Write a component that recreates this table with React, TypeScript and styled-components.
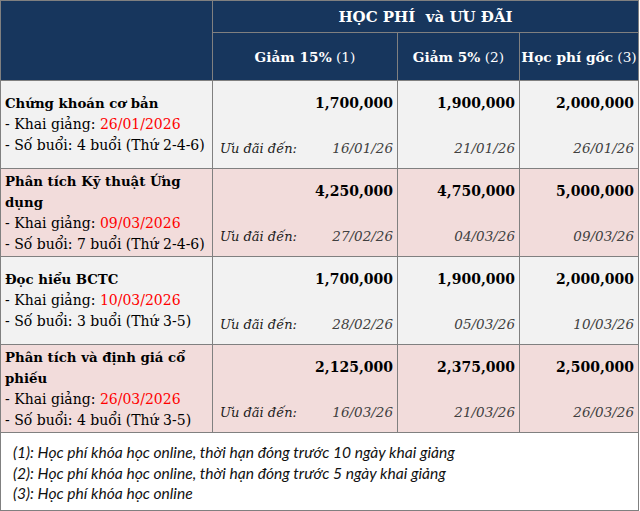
import React from 'react';
import styled, { createGlobalStyle } from 'styled-components';

const GlobalStyle = createGlobalStyle`
    html, body {
        margin: 0;
        padding: 0;
        background: #ffffff;
    }
    body {
        font-family: 'DejaVu Serif', serif;
    }
`;

const Table = styled.div`
    display: grid;
    grid-template-columns: 211px 184px 121px 118px;
    grid-template-rows: 31px 47px repeat(4, 87px) 77px;
    gap: 1px;
    padding: 1px;
    width: 639px;
    box-sizing: border-box;
    background: #808080;
    font-family: 'DejaVu Serif', serif;
    color: #000;
`;

const HeadCell = styled.div<{ $span?: string; $rows?: string }>`
    background: #17365d;
    color: #ffffff;
    display: flex;
    align-items: center;
    justify-content: center;
    font-size: 13.7px;
    white-space: nowrap;
    grid-column: ${(p) => p.$span || 'auto'};
    grid-row: ${(p) => p.$rows || 'auto'};
`;

const HeadTitle = styled.span`
    font-weight: bold;
    font-size: 15px;
    white-space: pre;
`;

const HeadLabel = styled.span`
    font-weight: bold;
`;

const CourseCell = styled.div<{ $pink?: boolean }>`
    background: ${(p) => (p.$pink ? '#f2dcdb' : '#f2f2f2')};
    display: flex;
    flex-direction: column;
    justify-content: center;
    padding: 0 4px;
    font-size: 14px;
    line-height: 21px;
`;

const CourseName = styled.div`
    font-weight: bold;
    font-size: 13.3px;
`;

const Red = styled.span`
    color: #ff0000;
`;

const PriceCell = styled.div<{ $pink?: boolean }>`
    background: ${(p) => (p.$pink ? '#f2dcdb' : '#f2f2f2')};
    display: flex;
    flex-direction: column;
    justify-content: space-between;
    padding: 12px 4px 9px 7px;
    line-height: 21px;
`;

const Price = styled.div`
    font-weight: bold;
    font-size: 14px;
    text-align: right;
`;

const DateRow = styled.div`
    display: flex;
    justify-content: space-between;
    font-style: italic;
    font-size: 13.5px;
`;

const DealLabel = styled.span`
    color: #1a1a1a;
    font-size: 13px;
`;

const DealDate = styled.span`
    color: #404040;
    margin-left: auto;
`;

const Footer = styled.div`
    grid-column: 1 / -1;
    background: #ffffff;
    padding: 9px 12px;
    font-family: Lato, 'Noto Sans', sans-serif;
    font-style: italic;
    font-size: 15.6px;
    line-height: 20.5px;
    color: #111;
`;

type Course = {
    name: string;
    start: string;
    sessions: string;
    prices: string[];
    dates: string[];
};

const courses: Course[] = [
    {
        name: 'Chứng khoán cơ bản',
        start: '26/01/2026',
        sessions: '- Số buổi: 4 buổi (Thứ 2-4-6)',
        prices: ['1,700,000', '1,900,000', '2,000,000'],
        dates: ['16/01/26', '21/01/26', '26/01/26'],
    },
    {
        name: 'Phân tích Kỹ thuật Ứng dụng',
        start: '09/03/2026',
        sessions: '- Số buổi: 7 buổi (Thứ 2-4-6)',
        prices: ['4,250,000', '4,750,000', '5,000,000'],
        dates: ['27/02/26', '04/03/26', '09/03/26'],
    },
    {
        name: 'Đọc hiểu BCTC',
        start: '10/03/2026',
        sessions: '- Số buổi: 3 buổi (Thứ 3-5)',
        prices: ['1,700,000', '1,900,000', '2,000,000'],
        dates: ['28/02/26', '05/03/26', '10/03/26'],
    },
    {
        name: 'Phân tích và định giá cổ phiếu',
        start: '26/03/2026',
        sessions: '- Số buổi: 4 buổi (Thứ 3-5)',
        prices: ['2,125,000', '2,375,000', '2,500,000'],
        dates: ['16/03/26', '21/03/26', '26/03/26'],
    },
];

const notes = [
    '(1): Học phí khóa học online, thời hạn đóng trước 10 ngày khai giảng',
    '(2): Học phí khóa học online, thời hạn đóng trước 5 ngày khai giảng',
    '(3): Học phí khóa học online',
];

export default function App() {
    return (
        <>
            <GlobalStyle />
            <Table>
                <HeadCell $rows='1 / 3' />
                <HeadCell $span='2 / 5'>
                    <HeadTitle>{'HỌC PHÍ  và ƯU ĐÃI'}</HeadTitle>
                </HeadCell>
                <HeadCell>
                    <HeadLabel>Giảm 15%</HeadLabel>&nbsp;(1)
                </HeadCell>
                <HeadCell>
                    <HeadLabel>Giảm 5%</HeadLabel>&nbsp;(2)
                </HeadCell>
                <HeadCell>
                    <HeadLabel>Học phí gốc</HeadLabel>&nbsp;(3)
                </HeadCell>

                {courses.map((course, i) => {
                    const pink = i % 2 === 1;
                    return (
                        <React.Fragment key={course.name}>
                            <CourseCell $pink={pink}>
                                <CourseName>{course.name}</CourseName>
                                <div>
                                    - Khai giảng: <Red>{course.start}</Red>
                                </div>
                                <div>{course.sessions}</div>
                            </CourseCell>
                            {course.prices.map((price, j) => (
                                <PriceCell $pink={pink} key={price + j}>
                                    <Price>{price}</Price>
                                    <DateRow>
                                        {j === 0 && (
                                            <DealLabel>Ưu đãi đến:</DealLabel>
                                        )}
                                        <DealDate>{course.dates[j]}</DealDate>
                                    </DateRow>
                                </PriceCell>
                            ))}
                        </React.Fragment>
                    );
                })}

                <Footer>
                    {notes.map((note) => (
                        <div key={note}>{note}</div>
                    ))}
                </Footer>
            </Table>
        </>
    );
}
